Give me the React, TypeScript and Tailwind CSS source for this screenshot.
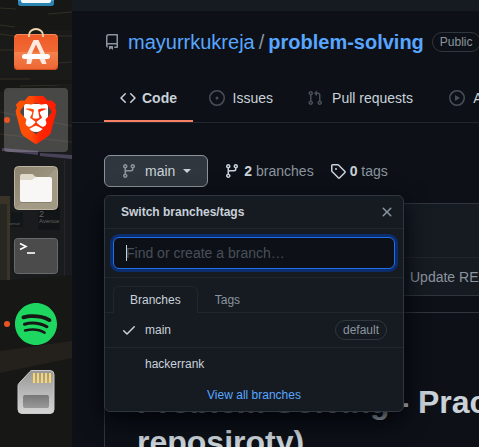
import type { ReactNode } from 'react';
import { SiBrave, SiSpotify } from 'react-icons/si';

const paths = {
  repo: 'M2 2.5A2.5 2.5 0 014.5 0h8.75a.75.75 0 01.75.75v12.5a.75.75 0 01-.75.75h-2.5a.75.75 0 110-1.5h1.75v-2h-8a1 1 0 00-.714 1.7.75.75 0 01-1.072 1.05A2.495 2.495 0 012 11.5v-9zm10.5-1V9h-8c-.356 0-.694.074-1 .208V2.5a1 1 0 011-1h8zM5 12.25v3.25a.25.25 0 00.4.2l1.45-1.087a.25.25 0 01.3 0L8.6 15.7a.25.25 0 00.4-.2v-3.25a.25.25 0 00-.25-.25h-3.5a.25.25 0 00-.25.25z',
  code: 'M4.72 3.22a.75.75 0 011.06 1.06L2.06 8l3.72 3.72a.75.75 0 11-1.06 1.06L.47 8.53a.75.75 0 010-1.06l4.25-4.25zm6.56 0a.75.75 0 10-1.06 1.06L13.94 8l-3.72 3.72a.75.75 0 101.06 1.06l4.25-4.25a.75.75 0 000-1.06l-4.25-4.25z',
  issue:
    'M8 9.5a1.5 1.5 0 100-3 1.5 1.5 0 000 3zM8 0a8 8 0 100 16A8 8 0 008 0zM1.5 8a6.5 6.5 0 1113 0 6.5 6.5 0 01-13 0z',
  pull: 'M7.177 3.073L9.573.677A.25.25 0 0110 .854v4.792a.25.25 0 01-.427.177L7.177 3.427a.25.25 0 010-.354zM3.75 2.5a.75.75 0 100 1.5.75.75 0 000-1.5zm-2.25.75a2.25 2.25 0 113 2.122v5.256a2.251 2.251 0 11-1.5 0V5.372A2.25 2.25 0 011.5 3.25zM11 2.5h-1V4h1a1 1 0 011 1v5.628a2.251 2.251 0 101.5 0V5A2.5 2.5 0 0011 2.5zm1 10.25a.75.75 0 111.5 0 .75.75 0 01-1.5 0zM3.75 12a.75.75 0 100 1.5.75.75 0 000-1.5z',
  play: 'M1.5 8a6.5 6.5 0 1113 0 6.5 6.5 0 01-13 0zM8 0a8 8 0 100 16A8 8 0 008 0zM6.379 5.227A.25.25 0 006 5.442v5.117a.25.25 0 00.379.214l4.264-2.559a.25.25 0 000-.428L6.379 5.227z',
  branch:
    'M11.75 2.5a.75.75 0 100 1.5.75.75 0 000-1.5zm-2.25.75a2.25 2.25 0 113 2.122V6A2.5 2.5 0 0110 8.5H6a1 1 0 00-1 1v1.128a2.251 2.251 0 11-1.5 0V5.372a2.25 2.25 0 111.5 0v1.836A2.492 2.492 0 016 7h4a1 1 0 001-1v-.628A2.25 2.25 0 019.5 3.25zM4.25 12a.75.75 0 100 1.5.75.75 0 000-1.5zM3.5 3.25a.75.75 0 111.5 0 .75.75 0 01-1.5 0z',
  tag: 'M2.5 7.775V2.75a.25.25 0 01.25-.25h5.025a.25.25 0 01.177.073l6.25 6.25a.25.25 0 010 .354l-5.025 5.025a.25.25 0 01-.354 0l-6.25-6.25a.25.25 0 01-.073-.177zm-1.5 0V2.75C1 1.784 1.784 1 2.75 1h5.025c.464 0 .91.184 1.238.513l6.25 6.25a1.75 1.75 0 010 2.474l-5.026 5.026a1.75 1.75 0 01-2.474 0l-6.25-6.25A1.75 1.75 0 011 7.775zM6 5a1 1 0 100 2 1 1 0 000-2z',
  x: 'M3.72 3.72a.75.75 0 011.06 0L8 6.94l3.22-3.22a.75.75 0 111.06 1.06L9.06 8l3.22 3.22a.75.75 0 11-1.06 1.06L8 9.06l-3.22 3.22a.75.75 0 01-1.06-1.06L6.94 8 3.72 4.78a.75.75 0 010-1.06z',
  check:
    'M13.78 4.22a.75.75 0 010 1.06l-7.25 7.25a.75.75 0 01-1.06 0L2.22 9.28a.75.75 0 011.06-1.06L6 10.94l6.72-6.72a.75.75 0 011.06 0z',
};

function Octicon({ name, className = '' }: { name: keyof typeof paths; className?: string }) {
  return (
    <svg viewBox="0 0 16 16" fill="currentColor" aria-hidden="true" className={`size-4 shrink-0 ${className}`}>
      <path fillRule="evenodd" d={paths[name]} />
    </svg>
  );
}

function Wallpaper() {
  return (
    <svg
      viewBox="0 0 72 447"
      preserveAspectRatio="none"
      aria-hidden="true"
      className="absolute inset-0 h-full w-full"
    >
      <rect width="72" height="447" fill="#171816" />
      <rect y="30" width="72" height="50" fill="#1a1b18" />
      <g stroke="#393427" strokeWidth="1.2" opacity=".8">
        <path d="M0 25l15 2M0 34l14 2M58 36h14M0 50h14M58 63l14-1M0 79h30M20 86l52-1M48 14l24-2M0 8l16 1" />
      </g>
      <path d="M0 92l72-8v66H0z" fill="#1b1b19" />
      <path d="M0 112l72 14M0 134l72 8" stroke="#2b2722" strokeWidth="1.5" />
      <rect y="150" width="72" height="130" fill="#191b1d" />
      <path d="M2 148l36 3v4L2 151zM40 153l32 2v4l-32-3z" fill="#4a4259" />
      <rect y="196" width="10" height="84" fill="#3a3328" />
      <rect y="204" width="7" height="76" fill="#292722" />
      <rect x="11" y="212" width="12" height="15" fill="#111719" />
      <rect x="38" y="208" width="22" height="22" fill="#111518" />
      <rect x="64" y="160" width="1" height="118" fill="#272530" />
      <path d="M0 281l72-6v172H0z" fill="#171715" />
      <path d="M0 351l72-10v17L0 373z" fill="#24211c" />
      <text x="39" y="217" fontSize="9" fill="#60625b" fontFamily="Liberation Sans">2</text>
      <text x="39" y="223" fontSize="6" fill="#60625b" fontFamily="Liberation Sans">Avenue</text>
      <text x="9" y="225" fontSize="4" fill="#60625b" fontFamily="Liberation Sans">venue</text>
    </svg>
  );
}

function DockItem({
  label,
  active = false,
  running = false,
  children,
}: {
  label: string;
  active?: boolean;
  running?: boolean;
  children: ReactNode;
}) {
  return (
    <button
      type="button"
      aria-label={label}
      className={`relative flex size-16 shrink-0 items-center justify-center rounded-sm ${active ? 'bg-white/20' : ''}`}
    >
      {running && <span className="absolute top-[29px] left-0 size-[6px] rounded-full bg-[#e95420]" />}
      {children}
    </button>
  );
}

function Dock() {
  return (
    <nav aria-label="Dock" className="relative w-[72px] shrink-0 overflow-hidden">
      <Wallpaper />
      <div className="relative -mt-12 flex flex-col items-center gap-1">
        <DockItem label="Editor">
          <svg viewBox="0 0 64 64" className="size-16">
            <rect x="14" y="14" width="36" height="40" rx="4" fill="#43a6d5" />
            <path d="M14 49v2a3 3 0 003 3h30a3 3 0 003-3v-2" fill="#2a83b0" />
            <rect x="17" y="17" width="30" height="34" rx="2" fill="#f6f8fa" />
          </svg>
        </DockItem>
        <DockItem label="Software">
          <svg viewBox="0 0 64 64" className="size-16">
            <defs>
              <linearGradient id="bag" x1="0" y1="0" x2="0" y2="1">
                <stop offset="0" stopColor="#ef5a26" />
                <stop offset=".5" stopColor="#f06a36" />
                <stop offset=".5" stopColor="#f3824f" />
                <stop offset="1" stopColor="#ee6531" />
              </linearGradient>
            </defs>
            <rect x="10" y="14" width="44" height="36" rx="4" fill="url(#bag)" />
            <path d="M10.5 46a3.5 3.5 0 003.5 3.5h36a3.5 3.5 0 003.5-3.5" fill="none" stroke="#cf4a1d" />
            <path d="M11 17a3 3 0 013-2.5h36a3 3 0 013 2.5" fill="none" stroke="#f58a5e" />
            <path d="M25 17v-2a7 6 0 0114 0v2" fill="none" stroke="#eed5ad" strokeWidth="1.8" />
            <path d="M29.5 20h5l6.500 14h-4.5L32 24.500 27.500 34H23z" fill="#fde9df" />
            <path d="M23 39h5.500l-1.500 5h-4.500zM35.500 39H41l1.500 5H38z" fill="#fde9df" />
            <rect x="18" y="34" width="28" height="5" rx="2.5" fill="#fff" />
          </svg>
        </DockItem>
        <DockItem label="Brave" active running>
          <svg width="0" height="0" className="absolute">
            <defs>
              <linearGradient id="lion" gradientUnits="userSpaceOnUse" x1="0" y1="0" x2="24" y2="0">
                <stop offset="0" stopColor="#ff5500" />
                <stop offset=".4" stopColor="#ff4a08" />
                <stop offset=".6" stopColor="#ff2400" />
                <stop offset="1" stopColor="#ff1b00" />
              </linearGradient>
            </defs>
          </svg>
          <span className="absolute top-4 left-5 h-7 w-6 rounded-b-xl bg-white" />
          <SiBrave fill="url(#lion)" className="relative size-12" />
        </DockItem>
        <DockItem label="Files">
          <svg viewBox="0 0 64 64" className="size-16">
            <defs>
              <linearGradient id="files" x1="0" y1="0" x2="1" y2="1">
                <stop offset="0" stopColor="#8d8470" />
                <stop offset=".5" stopColor="#9b927d" />
                <stop offset=".5" stopColor="#a49b87" />
                <stop offset="1" stopColor="#a19883" />
              </linearGradient>
            </defs>
            <rect x="10.5" y="10.5" width="43" height="43" rx="4" fill="url(#files)" stroke="#bbb39f" />
            <path d="M16 20a2 2 0 012-2h10c2 0 2 3 5 3h13v8H16z" fill="#dfd9cb" />
            <path d="M16 25c0-1 1-1 2-1h9c3 0 3-3 6-3h13a2 2 0 012 2v21a2 2 0 01-2 2H18a2 2 0 01-2-2z" fill="#f8f7f5" />
            <path d="M17 46.500h30" stroke="#766e5c" opacity=".6" />
          </svg>
        </DockItem>
        <DockItem label="Terminal">
          <svg viewBox="0 0 64 64" className="size-16">
            <rect x="10.5" y="14.5" width="43" height="35" rx="3" fill="#4b4b4b" stroke="#6a6a6a" />
            <path d="M16 19.5l6 3-6 3" fill="none" stroke="#fff" strokeWidth="1.6" />
            <path d="M23 29h8" stroke="#fff" strokeWidth="1.6" />
          </svg>
        </DockItem>
        <DockItem label="Spotify" running>
          <SiSpotify className="size-[42px] text-[#1ed760]" />
        </DockItem>
        <DockItem label="SD card">
          <svg viewBox="0 0 64 64" className="size-16">
            <defs>
              <linearGradient id="sd" x1="0" y1="0" x2="0" y2="1">
                <stop offset="0" stopColor="#979797" />
                <stop offset="1" stopColor="#d6d6d6" />
              </linearGradient>
              <linearGradient id="slot" x1="0" y1="0" x2="0" y2="1">
                <stop offset="0" stopColor="#777" />
                <stop offset="1" stopColor="#999" />
              </linearGradient>
            </defs>
            <path
              d="M28 10.5h18a4 4 0 014 4v35a4 4 0 01-4 4H18a4 4 0 01-4-4V26c0-1 .3-2 1-2.700L26 11.500c.5-.6 1.200-1 2-1z"
              fill="url(#sd)"
              stroke="#c9c9c9"
            />
            <path d="M30 13v10M34 13v10M38 13v10M42 13v10M46 13v10" stroke="#ffd75e" strokeWidth="2" />
            <rect x="19" y="35" width="26" height="13" rx="2" fill="url(#slot)" />
          </svg>
        </DockItem>
      </div>
    </nav>
  );
}

const tabs: { label: string; icon: keyof typeof paths }[] = [
  { label: 'Code', icon: 'code' },
  { label: 'Issues', icon: 'issue' },
  { label: 'Pull requests', icon: 'pull' },
  { label: 'Actions', icon: 'play' },
];

function BranchMenu() {
  return (
    <div
      role="dialog"
      aria-label="Switch branches/tags"
      className="absolute top-10 left-0 z-10 w-[300px] rounded-md border border-[#30363d] bg-[#161b22] text-xs shadow-[0_8px_24px_#010409]"
    >
      <header className="flex h-[33px] items-center justify-between border-b border-[#21262d] pr-2 pl-4">
        <h2 className="font-semibold">Switch branches/tags</h2>
        <button type="button" aria-label="Close" className="text-[#8b949e]">
          <Octicon name="x" />
        </button>
      </header>
      <div className="relative border-b border-[#21262d] p-2">
        <input
          type="text"
          aria-label="Find or create a branch"
          placeholder="Find or create a branch…"
          className="block h-8 w-full rounded-md border border-[#1f6feb] bg-[#0d1117] px-3 text-sm shadow-[0_0_0_3px_#0c2d6b] outline-none placeholder:text-[#484f58]"
        />
        <span className="absolute top-4 left-[21px] h-4 w-px bg-[#c9d1d9]" />
      </div>
      <div role="tablist" className="flex border-b border-[#21262d] px-2 pt-2">
        <button
          type="button"
          role="tab"
          aria-selected="true"
          className="-mb-px h-[27px] rounded-t-md border border-b-0 border-[#21262d] bg-[#161b22] px-4"
        >
          Branches
        </button>
        <button
          type="button"
          role="tab"
          aria-selected="false"
          className="-mb-px h-[27px] border border-b-0 border-transparent px-4 text-[#8b949e]"
        >
          Tags
        </button>
      </div>
      <button type="button" className="flex h-[35px] w-full items-center border-b border-[#21262d] px-4 text-left">
        <Octicon name="check" className="mr-2" />
        <span className="grow">main</span>
        <span className="rounded-full border border-[#30363d] px-[7px] leading-[18px] text-[#8b949e]">default</span>
      </button>
      <button type="button" className="flex h-8 w-full items-center pr-4 pl-10 text-left">
        hackerrank
      </button>
      <footer className="flex h-[31px] items-start justify-center pt-[7px]">
        <a href="#branches" className="text-[#58a6ff]">
          View all branches
        </a>
      </footer>
    </div>
  );
}

export default function App() {
  return (
    <div className="flex h-screen overflow-hidden bg-[#0d1117] font-['Liberation_Sans',Arial,sans-serif] text-sm text-[#c9d1d9]">
      <Dock />
      <main className="min-w-0 grow overflow-hidden">
        <div className="h-[11px] bg-[#161b22]" />
        <header className="flex items-center px-8 pt-4 whitespace-nowrap">
          <Octicon name="repo" className="mr-2 text-[#8b949e]" />
          <h1 className="flex text-xl leading-[30px]">
            <a href="#owner" className="text-[#58a6ff]">
              mayurrkukreja
            </a>
            <span className="mx-1 text-[#8b949e]">/</span>
            <a href="#repo" className="font-semibold text-[#58a6ff]">
              problem-solving
            </a>
          </h1>
          <span className="ml-2 rounded-full border border-[#30363d] px-[7px] text-xs leading-[18px] text-[#8b949e]">
            Public
          </span>
        </header>
        <nav
          aria-label="Repository"
          className="mt-[18px] flex h-12 border-b border-[#21262d] pl-8 whitespace-nowrap"
        >
          {tabs.map((tab, i) => (
            <a
              key={tab.label}
              href={`#${tab.label}`}
              className={`flex shrink-0 items-center gap-[6px] border-b-2 px-4 ${
                i === 0 ? 'border-[#f78166] font-semibold' : 'border-transparent'
              }`}
            >
              <Octicon name={tab.icon} className={i === 0 ? '' : 'text-[#484f58]'} />
              <span
                data-label={tab.label}
                className="text-center before:invisible before:block before:h-0 before:font-semibold before:content-[attr(data-label)]"
              >
                {tab.label}
              </span>
            </a>
          ))}
        </nav>
        <div className="pt-8 pl-8">
          <div className="flex items-center whitespace-nowrap">
            <div className="relative">
              <button
                type="button"
                aria-haspopup="true"
                aria-expanded="true"
                className="flex h-8 items-center rounded-md border border-[#8b949e] bg-[#30363d] px-4"
              >
                <Octicon name="branch" className="mr-2 text-[#8b949e]" />
                main
                <span className="ml-2 border-x-4 border-t-4 border-x-transparent border-t-[#c9d1d9]" />
              </button>
              <BranchMenu />
            </div>
            <a href="#all-branches" className="ml-4 flex items-center gap-1 text-[#8b949e]">
              <Octicon name="branch" className="text-[#c9d1d9]" />
              <span>
                <strong className="text-[#c9d1d9]">2</strong> branches
              </span>
            </a>
            <a href="#all-tags" className="ml-4 flex items-center gap-1 text-[#8b949e]">
              <Octicon name="tag" className="text-[#c9d1d9]" />
              <span>
                <strong className="text-[#c9d1d9]">0</strong> tags
              </span>
            </a>
          </div>
          <section className="mt-4 rounded-tl-md border border-r-0 border-[#30363d] bg-[#161b22] whitespace-nowrap">
            <div className="h-[53px]" />
            <div className="flex h-[38px] items-center border-t border-[#21262d] pl-[305px] text-[#8b949e]">
              Update README.md
            </div>
          </section>
          <article className="mt-4 rounded-tl-md border border-r-0 border-[#30363d] px-8 pt-[69px] whitespace-nowrap">
            <h2 className="text-[32px] leading-10 font-semibold">
              Problem Solving - Practice
              <br />
              reposiroty)
            </h2>
          </article>
        </div>
      </main>
    </div>
  );
}
